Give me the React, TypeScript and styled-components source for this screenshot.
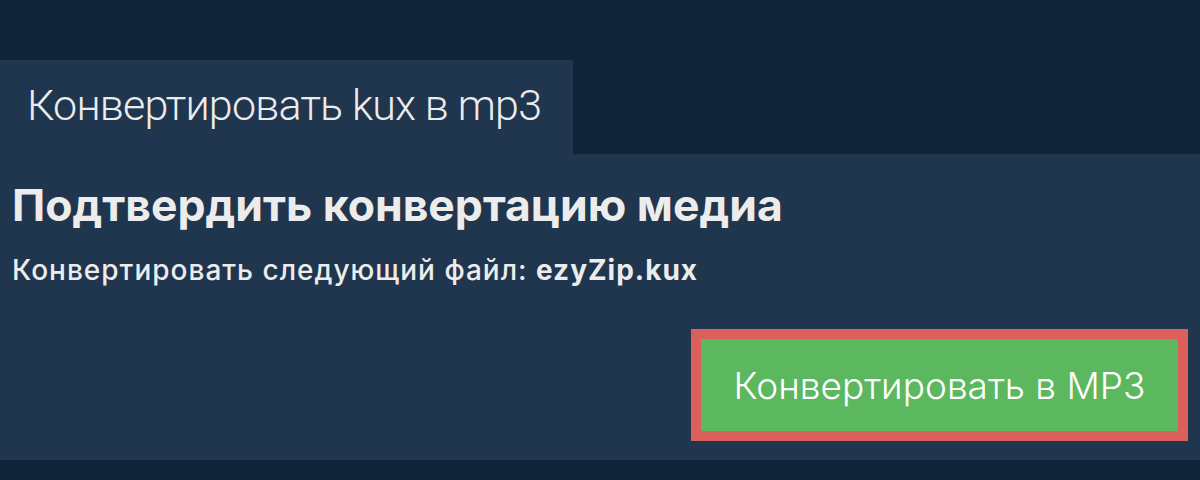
import React from 'react';
import styled, { createGlobalStyle } from 'styled-components';

const GlobalStyle = createGlobalStyle`
  html, body {
    margin: 0;
    padding: 0;
    background: #0f2339;
  }
`;

const Page = styled.div`
  background: #0f2339;
  padding: 60px 0 20px;
  width: 1200px;
  height: 480px;
  box-sizing: border-box;
`;

const Tab = styled.div`
  display: inline-flex;
  align-items: center;
  width: 573px;
  height: 94px;
  box-sizing: border-box;
  padding: 0 0 4px 27px;
  background: #20354e;
  color: #ececec;
  font-family: Roboto, 'Liberation Sans', sans-serif;
  font-weight: 300;
  font-size: 43px;
  letter-spacing: -0.8px;
  vertical-align: top;
`;

const Panel = styled.div`
  background: #20354e;
  height: 306px;
  box-sizing: border-box;
  padding: 23px 12px 0;
  display: flex;
  flex-direction: column;
`;

const Heading = styled.h1`
  margin: 0;
  font-family: Inter, 'Noto Sans', sans-serif;
  font-weight: 700;
  font-size: 44.5px;
  line-height: 56px;
  color: #ececec;
`;

const Subtitle = styled.p`
  margin: 21px 0 0;
  font-family: Inter, 'Noto Sans', sans-serif;
  font-weight: 500;
  font-size: 28px;
  line-height: 32px;
  letter-spacing: 1px;
  color: #ececec;

  b {
    font-weight: 700;
  }
`;

const Actions = styled.div`
  display: flex;
  justify-content: flex-end;
  margin-top: auto;
  padding: 0 0 19px;
`;

const ConvertButton = styled.button`
  width: 497px;
  height: 112px;
  box-sizing: border-box;
  border: 10px solid #dc5f5c;
  background: #5cb85f;
  color: #fff;
  font-family: Inter, 'Noto Sans', sans-serif;
  font-weight: 300;
  font-size: 37px;
  cursor: pointer;
`;

export default function App() {
  return (
    <>
      <GlobalStyle />
      <Page>
        <Tab>Конвертировать kux в mp3</Tab>
        <Panel>
          <Heading>Подтвердить конвертацию медиа</Heading>
          <Subtitle>
            Конвертировать следующий файл: <b>ezyZip.kux</b>
          </Subtitle>
          <Actions>
            <ConvertButton>Конвертировать в MP3</ConvertButton>
          </Actions>
        </Panel>
      </Page>
    </>
  );
}
